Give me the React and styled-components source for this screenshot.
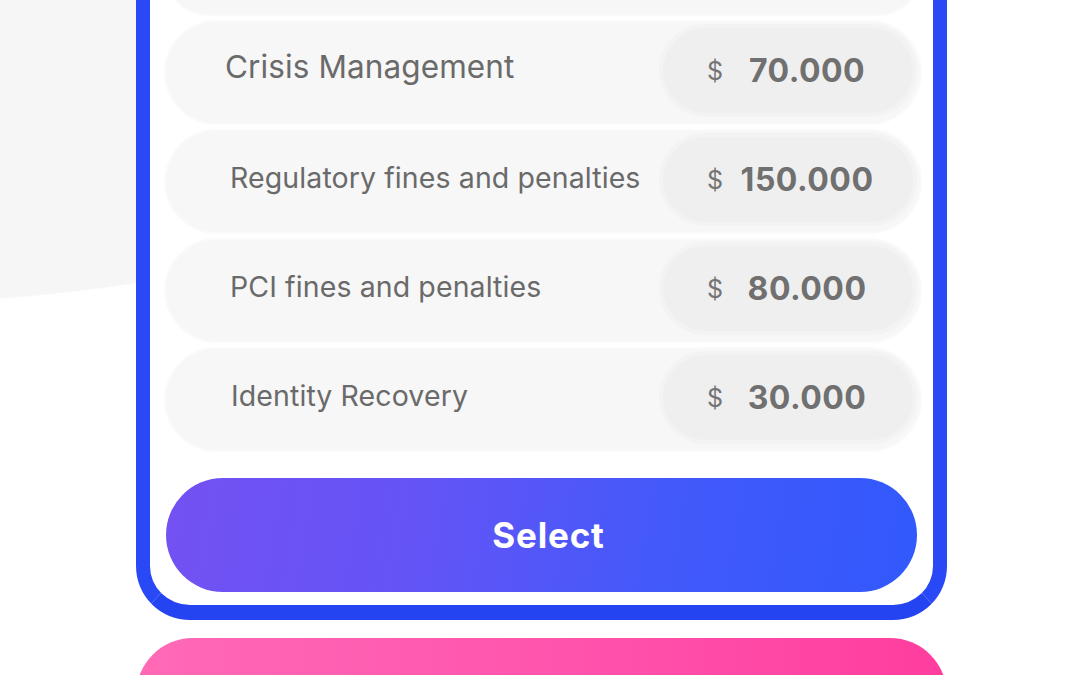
import React from 'react'
import styled, { createGlobalStyle } from 'styled-components'

const GlobalStyle = createGlobalStyle`
  html, body {
    margin: 0;
    padding: 0;
    background: #ffffff;
    font-family: Inter, "Noto Sans", sans-serif;
  }
  body {
    height: 675px;
    overflow: hidden;
  }
`

const covers = [
  { label: 'Crisis Management', amount: '70.000', size: 31.5, inset: 59, lift: 12 },
  { label: 'Regulatory fines and penalties', amount: '150.000', size: 28.5, inset: 64, lift: 8 },
  { label: 'PCI fines and penalties', amount: '80.000', size: 28.5, inset: 64, lift: 8 },
  { label: 'Identity Recovery', amount: '30.000', size: 28.5, inset: 65, lift: 8 },
]

export default function App() {
  return (
    <Page>
      <GlobalStyle />
      <PlanCard>
        <RowList>
          {/* the row above is scrolled out of view, only its bottom shows */}
          <RowStub />
          {covers.map((c) => (
            <CoverRow key={c.label} $inset={c.inset}>
              <CoverLabel $size={c.size} $lift={c.lift}>{c.label}</CoverLabel>
              <AmountPill>
                <Dollar>$</Dollar>
                <Amount>{c.amount}</Amount>
              </AmountPill>
            </CoverRow>
          ))}
        </RowList>
        <SelectButton>Select</SelectButton>
      </PlanCard>
      <NextPlan />
    </Page>
  )
}

const Page = styled.div`
  width: 1080px;
  height: 675px;
  overflow: hidden;
  background: radial-gradient(ellipse 900px 405px at -150px -100px, #f6f6f6 99.6%, rgba(246, 246, 246, 0) 100%);
  display: flex;
  flex-direction: column;
  align-items: flex-start;
`

const PlanCard = styled.div`
  box-sizing: border-box;
  width: 811px;
  margin: -28px 0 0 136px;
  padding: 0 13px 13px 16px;
  background: #ffffff;
  border: 14px solid #2949f6;
  border-top: none;
  border-bottom-width: 15px;
  border-bottom-color: #2544f1;
  border-radius: 0 0 54px 54px;
  display: flex;
  flex-direction: column;
`

const RowList = styled.div`
  display: flex;
  flex-direction: column;
  gap: 8px;
`

const CoverRow = styled.div`
  box-sizing: border-box;
  height: 101px;
  border-radius: 51px;
  background: #f7f7f7;
  box-shadow: 0 0 0 2px #fafafa;
  padding-left: ${(p) => p.$inset}px;
  padding-right: 7px;
  display: flex;
  align-items: flex-start;
  justify-content: space-between;
`

const RowStub = styled(CoverRow)`
  height: 42px;
  border-radius: 0 0 51px 51px;
`

const CoverLabel = styled.span`
  align-self: center;
  margin-top: -${(p) => p.$lift}px;
  font-size: ${(p) => p.$size}px;
  color: #6a6a6a;
  letter-spacing: 0.1px;
  white-space: nowrap;
`

const AmountPill = styled.div`
  box-sizing: border-box;
  margin-top: 6px;
  width: 250px;
  height: 85px;
  border-radius: 43px;
  background: #efefef;
  box-shadow: 0 0 0 4px #f3f3f3;
  padding: 0 22px 0 44px;
  display: flex;
  align-items: center;
`

const Dollar = styled.span`
  font-size: 25px;
  color: #747474;
`

const Amount = styled.span`
  flex: 1;
  text-align: center;
  font-size: 32px;
  font-weight: 700;
  color: #707070;
  letter-spacing: 0.5px;
`

const SelectButton = styled.button`
  margin: 28px 3px 0 0;
  padding-left: 20px;
  height: 114px;
  border: none;
  border-radius: 57px;
  background: linear-gradient(100deg, #7451f2 0%, #6354f6 35%, #4459fa 65%, #3159fc 100%);
  color: #ffffff;
  font-family: Inter, "Noto Sans", sans-serif;
  font-size: 35px;
  font-weight: 700;
  letter-spacing: 0.8px;
  cursor: pointer;
`

const NextPlan = styled.div`
  margin: 18px 0 0 136px;
  width: 811px;
  height: 114px;
  flex-shrink: 0;
  border-radius: 62px;
  background: linear-gradient(90deg, #ff6ab6 0%, #ff55ad 50%, #ff3d9f 100%);
`
